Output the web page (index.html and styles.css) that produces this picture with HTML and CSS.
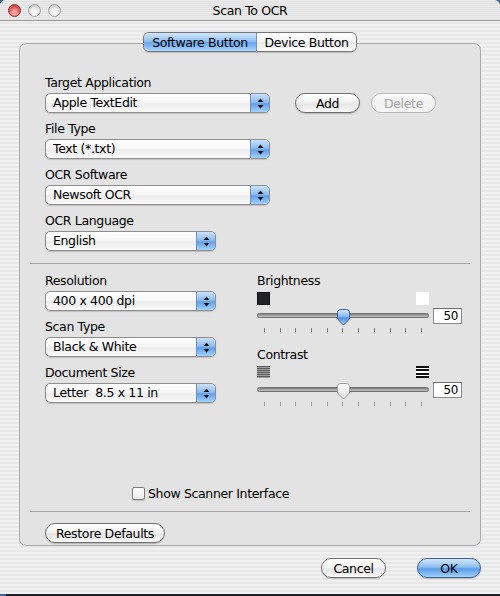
FILE: index.html
```html
<!DOCTYPE html>
<html>
<head>
<meta charset="utf-8">
<link rel="stylesheet" href="styles.css">
</head>
<body>
<div class="window">
  <div class="titlebar">
    <div class="lights"><span class="light close"></span><span class="light"></span><span class="light"></span></div>
    <div class="title">Scan To OCR</div>
    <div></div>
  </div>

  <div class="tabs">
    <div class="seg">
      <span class="tab active">Software Button</span><span class="tab">Device Button</span>
    </div>
  </div>

  <div class="panel">
    <div class="top">
      <div class="field">
        <div class="label">Target Application</div>
        <div class="row">
          <div class="popup wide"><span class="val">Apple TextEdit</span><span class="arrows"><svg width="7" height="11" viewBox="0 0 7 11"><polygon points="0.5,4 3.5,0.5 6.5,4"/><polygon points="0.5,7 3.5,10.5 6.5,7"/></svg></span></div>
          <button class="btn add">Add</button>
          <button class="btn del" disabled>Delete</button>
        </div>
      </div>
      <div class="field">
        <div class="label">File Type</div>
        <div class="popup wide"><span class="val">Text (*.txt)</span><span class="arrows"><svg width="7" height="11" viewBox="0 0 7 11"><polygon points="0.5,4 3.5,0.5 6.5,4"/><polygon points="0.5,7 3.5,10.5 6.5,7"/></svg></span></div>
      </div>
      <div class="field">
        <div class="label">OCR Software</div>
        <div class="popup wide"><span class="val">Newsoft OCR</span><span class="arrows"><svg width="7" height="11" viewBox="0 0 7 11"><polygon points="0.5,4 3.5,0.5 6.5,4"/><polygon points="0.5,7 3.5,10.5 6.5,7"/></svg></span></div>
      </div>
      <div class="field">
        <div class="label">OCR Language</div>
        <div class="popup narrow"><span class="val">English</span><span class="arrows"><svg width="7" height="11" viewBox="0 0 7 11"><polygon points="0.5,4 3.5,0.5 6.5,4"/><polygon points="0.5,7 3.5,10.5 6.5,7"/></svg></span></div>
      </div>
    </div>

    <div class="sep sep1"></div>

    <div class="middle">
      <div class="col-left">
        <div class="field">
          <div class="label">Resolution</div>
          <div class="popup narrow"><span class="val">400 x 400 dpi</span><span class="arrows"><svg width="7" height="11" viewBox="0 0 7 11"><polygon points="0.5,4 3.5,0.5 6.5,4"/><polygon points="0.5,7 3.5,10.5 6.5,7"/></svg></span></div>
        </div>
        <div class="field">
          <div class="label">Scan Type</div>
          <div class="popup narrow"><span class="val">Black &amp; White</span><span class="arrows"><svg width="7" height="11" viewBox="0 0 7 11"><polygon points="0.5,4 3.5,0.5 6.5,4"/><polygon points="0.5,7 3.5,10.5 6.5,7"/></svg></span></div>
        </div>
        <div class="field">
          <div class="label">Document Size</div>
          <div class="popup narrow"><span class="val">Letter&nbsp; 8.5 x 11 in</span><span class="arrows"><svg width="7" height="11" viewBox="0 0 7 11"><polygon points="0.5,4 3.5,0.5 6.5,4"/><polygon points="0.5,7 3.5,10.5 6.5,7"/></svg></span></div>
        </div>
      </div>

      <div class="col-right">
        <div class="label">Brightness</div>
        <div class="icons">
          <span class="sq black"></span><span class="sq white"></span>
        </div>
        <div class="slider-row">
          <div class="slider">
            <div class="track"></div>
            <svg class="thumb" width="15" height="17" viewBox="0 0 15 17">
              <defs>
                <linearGradient id="tb" x1="0" y1="0" x2="0" y2="1">
                  <stop offset="0" stop-color="#d6e9fd"/>
                  <stop offset="0.45" stop-color="#86b9ef"/>
                  <stop offset="0.55" stop-color="#4f92e2"/>
                  <stop offset="1" stop-color="#9fd0fb"/>
                </linearGradient>
              </defs>
              <path d="M1.5 3.5 Q1.5 0.5 4.5 0.5 H10.5 Q13.5 0.5 13.5 3.5 V10 L7.5 16 L1.5 10 Z" fill="url(#tb)" stroke="#3d5f94"/>
            </svg>
            <div class="ticks"><i></i><i></i><i></i><i></i><i></i><i></i><i></i><i></i><i></i><i></i><i></i></div>
          </div>
          <div class="numbox">50</div>
        </div>

        <div class="label contrast-label">Contrast</div>
        <div class="icons">
          <span class="sq lowc"></span><span class="sq highc"></span>
        </div>
        <div class="slider-row">
          <div class="slider">
            <div class="track"></div>
            <svg class="thumb" width="15" height="17" viewBox="0 0 15 17">
              <defs>
                <linearGradient id="tw" x1="0" y1="0" x2="0" y2="1">
                  <stop offset="0" stop-color="#ffffff"/>
                  <stop offset="0.5" stop-color="#f0f0f0"/>
                  <stop offset="1" stop-color="#e2e2e2"/>
                </linearGradient>
              </defs>
              <path d="M1.5 3.5 Q1.5 0.5 4.5 0.5 H10.5 Q13.5 0.5 13.5 3.5 V10 L7.5 16 L1.5 10 Z" fill="url(#tw)" stroke="#9c9c9c"/>
            </svg>
            <div class="ticks light-ticks"><i></i><i></i><i></i><i></i><i></i><i></i><i></i><i></i><i></i><i></i><i></i></div>
          </div>
          <div class="numbox">50</div>
        </div>
      </div>
    </div>

    <div class="check-row">
      <span class="checkbox"></span><span class="check-label">Show Scanner Interface</span>
    </div>

    <div class="sep sep2"></div>

    <div class="restore-row">
      <button class="btn restore">Restore Defaults</button>
    </div>
  </div>

  <div class="footer">
    <button class="btn cancel">Cancel</button>
    <button class="btn ok">OK</button>
  </div>
</div>
</body>
</html>
```

FILE: styles.css
```css
* { box-sizing: border-box; }

html, body {
  margin: 0;
  padding: 0;
}

body {
  width: 500px;
  height: 596px;
  overflow: hidden;
  background:
    linear-gradient(to bottom, #3f5f9e 0 300px, transparent 300px),
    linear-gradient(to right, #3f5f9e 0 6px, #1d1f29 6px);
  font-family: "DejaVu Sans", "Liberation Sans", sans-serif;
  font-size: 12.5px;
  letter-spacing: -0.35px;
  color: #000;
}

.window {
  width: 500px;
  height: 594px;
  border-radius: 6px 6px 0 0;
  background: repeating-linear-gradient(to bottom, #f0f0f0 0 2px, #e8e8e8 2px 4px);
  display: flex;
  flex-direction: column;
}

/* Title bar */
.titlebar {
  height: 21px;
  display: grid;
  grid-template-columns: 1fr auto 1fr;
  align-items: center;
  border-bottom: 1px solid #9a9a9a;
  border-radius: 6px 6px 0 0;
  background: repeating-linear-gradient(to bottom, #ebebeb 0 1px, #e1e1e1 1px 2px);
}

.lights {
  display: flex;
  gap: 7px;
  padding-left: 8px;
  padding-top: 1px;
}

.light {
  width: 13px;
  height: 13px;
  border-radius: 50%;
  border: 1px solid #a2a2a2;
  background: radial-gradient(circle at 50% 70%, #f6f6f6 0 30%, #d4d4d4 70%, #c0c0c0 100%);
}

.light.close {
  border-color: #8e2f2f;
  background: radial-gradient(circle at 50% 70%, #f3a2a2 0 20%, #dc5656 60%, #b52f2f 100%);
}

.title {
  padding-top: 1px;
}

/* Tabs */
.tabs {
  display: flex;
  justify-content: center;
  margin-top: 11px;
  margin-bottom: -9px;
  position: relative;
  z-index: 2;
}

.seg {
  display: flex;
  height: 20px;
  border: 1px solid #777;
  border-radius: 6px;
  overflow: hidden;
  box-shadow: 0 1px 1px rgba(0,0,0,0.18);
}

.tab {
  display: flex;
  align-items: center;
  justify-content: center;
  height: 18px;
  background: linear-gradient(to bottom, #ffffff 0%, #f5f5f5 45%, #e9e9e9 55%, #fbfbfb 100%);
}

.tab:first-child {
  width: 113px;
  border-right: 1px solid #6e8fc0;
}

.tab:last-child {
  width: 99px;
}

.tab.active {
  background: linear-gradient(to bottom, #d2e6fc 0%, #92c1f1 45%, #6ba7ec 55%, #a9d6fd 100%);
}

/* Panel */
.panel {
  margin: 0 19px;
  height: 503px;
  border: 1px solid #aaaaaa;
  border-radius: 7px;
  background: #e3e3e3;
  padding: 31px 10px 0;
  display: flex;
  flex-direction: column;
}

.top {
  padding-left: 15px;
  display: flex;
  flex-direction: column;
  gap: 8px;
}

.field {
  display: flex;
  flex-direction: column;
  gap: 2px;
}

.label {
  height: 16px;
  line-height: 16px;
}

.row {
  display: flex;
  align-items: center;
}

/* Popup buttons */
.popup {
  height: 20px;
  display: flex;
  border: 1px solid #8d8d8d;
  border-radius: 5px;
  overflow: hidden;
  background: linear-gradient(to bottom, #ffffff 0%, #f7f7f7 45%, #ececec 55%, #fafafa 100%);
  box-shadow: 0 1px 1px rgba(0,0,0,0.15);
}

.popup.wide { width: 225px; }
.popup.narrow { width: 171px; }

.popup .val {
  flex: 1;
  padding-left: 7px;
  line-height: 18px;
  white-space: nowrap;
}

.popup .arrows {
  width: 19px;
  display: flex;
  align-items: center;
  justify-content: center;
  border-left: 1px solid #6f8db9;
  background: linear-gradient(to bottom, #cbe2fb 0%, #8dbdf0 45%, #619fe8 55%, #a3d2fc 100%);
}

.popup .arrows svg { fill: #111; }

/* Push buttons */
.btn {
  font: inherit;
  letter-spacing: inherit;
  color: #000;
  height: 20px;
  padding: 0;
  border: 1px solid #707070;
  border-radius: 10px;
  background: linear-gradient(to bottom, #ffffff 0%, #f4f4f4 45%, #e5e5e5 55%, #fafafa 100%);
  box-shadow: 0 1px 1px rgba(0,0,0,0.2);
  line-height: 17px;
}

.btn.add { width: 65px; margin-left: 25px; }

.btn.del {
  width: 65px;
  margin-left: 11px;
  color: #a6a6a6;
  border-color: #b9b9b9;
  background: linear-gradient(to bottom, #fbfbfb 0%, #f1f1f1 50%, #f6f6f6 100%);
  box-shadow: none;
}

/* Separators */
.sep {
  height: 1px;
  background: #a5a5a5;
}

.sep1 { margin-top: 12px; }

/* Middle grid */
.middle {
  margin-top: 9px;
  padding-left: 15px;
  display: grid;
  grid-template-columns: 171px 205px;
  column-gap: 41px;
}

.col-left {
  display: flex;
  flex-direction: column;
  gap: 8px;
}

.col-right {
  display: flex;
  flex-direction: column;
}

.icons {
  width: 172px;
  height: 13px;
  margin-top: 3px;
  display: flex;
  justify-content: space-between;
}

.sq {
  width: 13px;
  height: 13px;
}

.sq.black {
  background: #222326;
  border: 1px solid #111;
}

.sq.white {
  background: #ffffff;
}

.sq.lowc {
  height: 12px;
  background: repeating-linear-gradient(to bottom, #5c5c5c 0 1px, #9d9d9d 1px 2px);
}

.sq.highc {
  height: 12px;
  background: repeating-linear-gradient(to bottom, #111 0 2px, #fff 2px 3.3px);
}

.slider-row {
  margin-top: 2px;
  display: flex;
  align-items: flex-start;
}

.slider {
  position: relative;
  width: 172px;
  height: 26px;
}

.track {
  position: absolute;
  left: 0;
  right: 0;
  top: 6px;
  height: 5px;
  border-radius: 3px;
  border: 1px solid #6f6f6f;
  background: linear-gradient(to bottom, #7f7f7f, #c4c4c4);
}

.thumb {
  position: absolute;
  left: 79px;
  top: 2px;
}

.ticks {
  position: absolute;
  left: 7px;
  right: 7px;
  top: 21px;
  height: 4px;
  display: flex;
  justify-content: space-between;
}

.ticks i {
  width: 1px;
  height: 4px;
  background: #7a7a7a;
}

.ticks.light-ticks i { background: #9a9a9a; }

.numbox {
  margin-left: 4px;
  margin-top: 1px;
  width: 29px;
  height: 16px;
  border: 1px solid #8a8a8a;
  border-top-color: #6d6d6d;
  background: #fff;
  text-align: right;
  padding-right: 3px;
  line-height: 14px;
  font-size: 12px;
}

.contrast-label { margin-top: 14px; }

/* Checkbox */
.check-row {
  margin-top: 78px;
  padding-left: 102px;
  height: 16px;
  display: flex;
  align-items: center;
  gap: 3px;
}

.checkbox {
  width: 13px;
  height: 13px;
  border: 1px solid #7d7d7d;
  border-radius: 2px;
  background: linear-gradient(to bottom, #ffffff, #ececec);
  box-shadow: 0 1px 1px rgba(0,0,0,0.15);
}

.sep2 { margin-top: 10px; }

.restore-row {
  margin-top: 11px;
  padding-left: 15px;
}

.btn.restore { width: 120px; }

/* Footer */
.footer {
  margin-top: 12px;
  padding-right: 19px;
  display: flex;
  justify-content: flex-end;
  gap: 31px;
}

.btn.cancel { width: 65px; }

.btn.ok {
  width: 64px;
  border-color: #3e5f92;
  background: linear-gradient(to bottom, #d0e5fc 0%, #8fbff1 45%, #5a9ce8 55%, #a2d1fc 100%);
}
```
